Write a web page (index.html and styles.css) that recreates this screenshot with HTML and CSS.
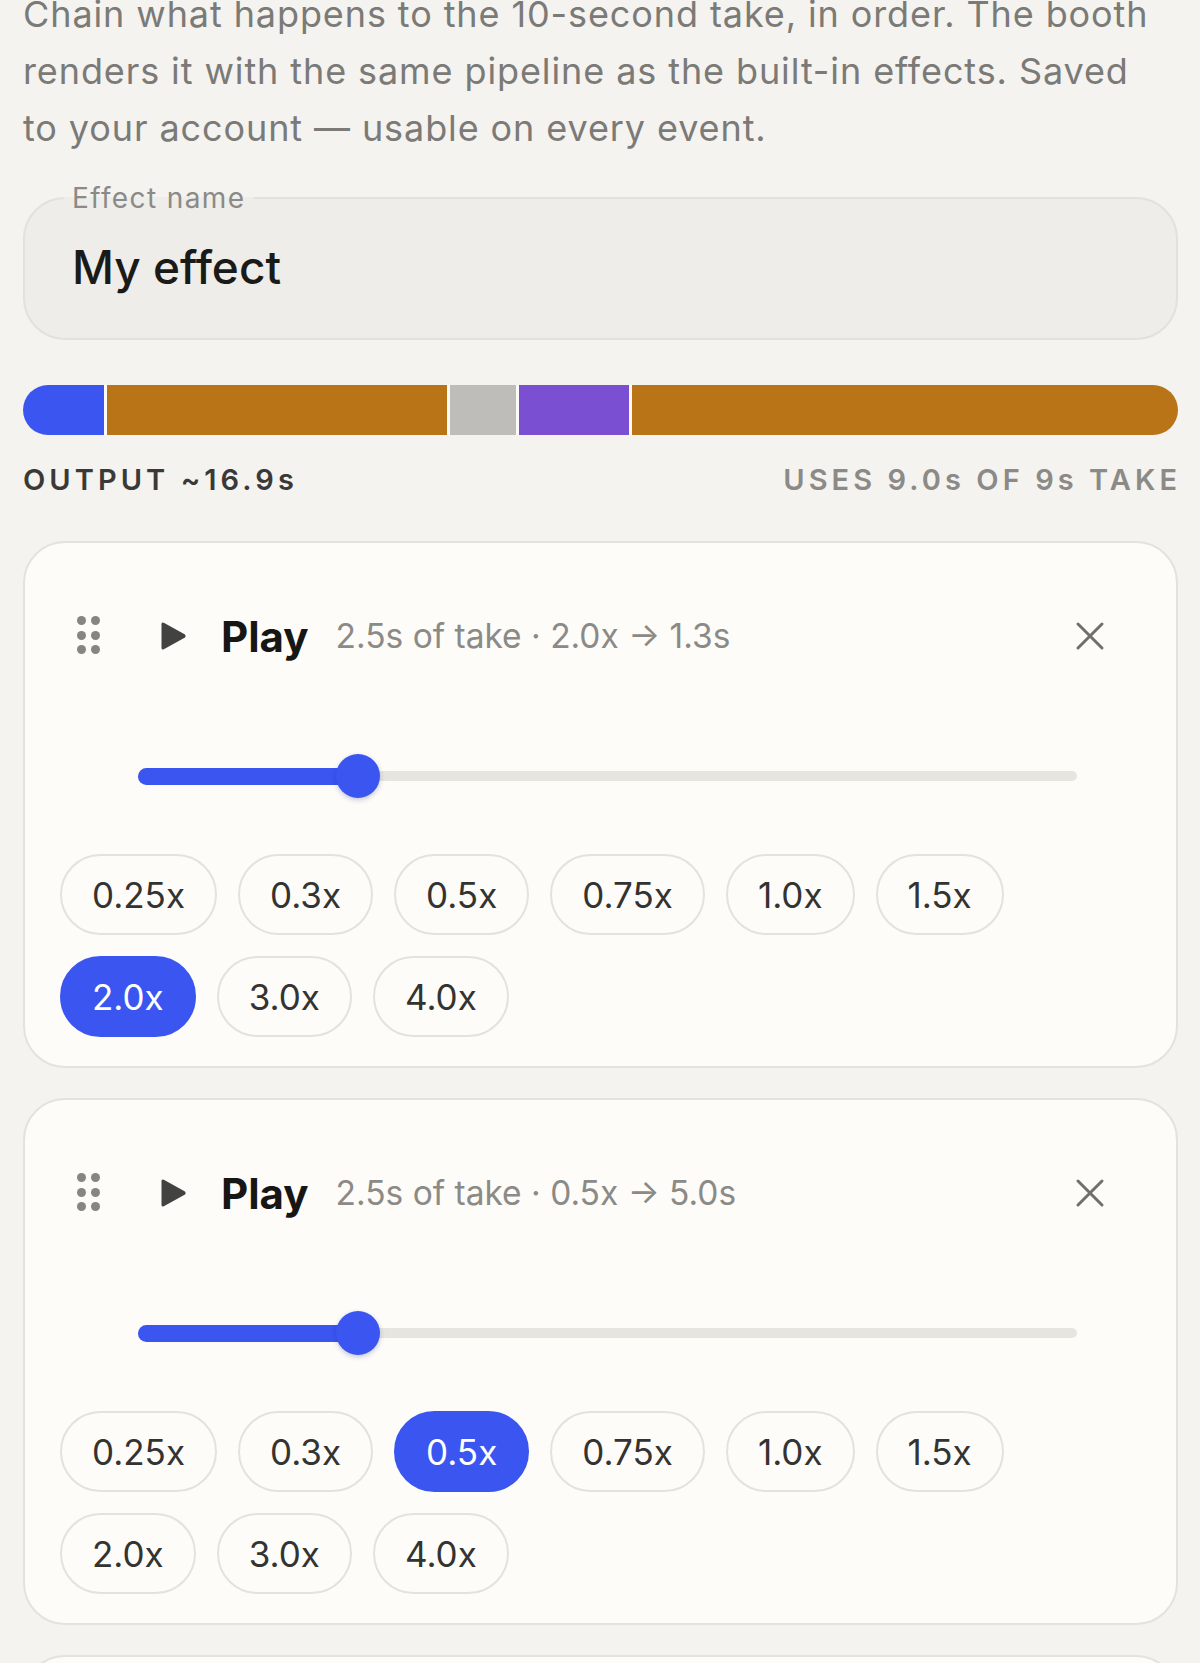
FILE: index.html
```html
<!DOCTYPE html>
<html lang="en">
<head>
<meta charset="utf-8">
<title>Custom effect</title>
<link rel="stylesheet" href="styles.css">
</head>
<body>
<main class="page">
  <p class="intro">Chain what happens to the 10-second take, in order. The booth renders it with the same pipeline as the built-in effects. Saved to your account — usable on every event.</p>

  <fieldset class="name-field">
    <legend>Effect name</legend>
    <div class="name-value">My effect</div>
  </fieldset>

  <div class="timeline">
    <span class="seg seg-blue" style="flex-grow:81"></span>
    <span class="seg seg-brown" style="flex-grow:339"></span>
    <span class="seg seg-gray" style="flex-grow:65"></span>
    <span class="seg seg-purple" style="flex-grow:110"></span>
    <span class="seg seg-brown" style="flex-grow:544"></span>
  </div>
  <div class="timeline-meta">
    <span class="meta-out">OUTPUT ~16.9s</span>
    <span class="meta-uses">USES 9.0s OF 9s TAKE</span>
  </div>

  <section class="step-card">
    <div class="step-head">
      <span class="drag"><i></i><i></i><i></i><i></i><i></i><i></i></span>
      <svg class="play-icon" width="27" height="30" viewBox="0 0 27 30"><path d="M1.5 3.2 Q1.5 0.6 3.8 1.8 L24.6 13.2 Q26.6 15 24.6 16.8 L3.8 28.2 Q1.5 29.4 1.5 26.8 Z" fill="#424240"/></svg>
      <span class="step-title">Play</span>
      <span class="step-desc">2.5s of take · 2.0x → 1.3s</span>
      <svg class="close-icon" width="30" height="30" viewBox="0 0 30 30"><path d="M3 3 L27 27 M27 3 L3 27" stroke="#6f6f6b" stroke-width="3" stroke-linecap="round"/></svg>
    </div>
    <div class="slider">
      <span class="track"></span>
      <span class="fill" style="width:23.4%"></span>
      <span class="thumb" style="left:calc(23.4% - 22px)"></span>
    </div>
    <div class="chips">
      <span class="chip">0.25x</span>
      <span class="chip">0.3x</span>
      <span class="chip">0.5x</span>
      <span class="chip">0.75x</span>
      <span class="chip">1.0x</span>
      <span class="chip">1.5x</span>
      <span class="chip chip-on">2.0x</span>
      <span class="chip">3.0x</span>
      <span class="chip">4.0x</span>
    </div>
  </section>

  <section class="step-card">
    <div class="step-head">
      <span class="drag"><i></i><i></i><i></i><i></i><i></i><i></i></span>
      <svg class="play-icon" width="27" height="30" viewBox="0 0 27 30"><path d="M1.5 3.2 Q1.5 0.6 3.8 1.8 L24.6 13.2 Q26.6 15 24.6 16.8 L3.8 28.2 Q1.5 29.4 1.5 26.8 Z" fill="#424240"/></svg>
      <span class="step-title">Play</span>
      <span class="step-desc">2.5s of take · 0.5x → 5.0s</span>
      <svg class="close-icon" width="30" height="30" viewBox="0 0 30 30"><path d="M3 3 L27 27 M27 3 L3 27" stroke="#6f6f6b" stroke-width="3" stroke-linecap="round"/></svg>
    </div>
    <div class="slider">
      <span class="track"></span>
      <span class="fill" style="width:23.4%"></span>
      <span class="thumb" style="left:calc(23.4% - 22px)"></span>
    </div>
    <div class="chips">
      <span class="chip">0.25x</span>
      <span class="chip">0.3x</span>
      <span class="chip chip-on">0.5x</span>
      <span class="chip">0.75x</span>
      <span class="chip">1.0x</span>
      <span class="chip">1.5x</span>
      <span class="chip">2.0x</span>
      <span class="chip">3.0x</span>
      <span class="chip">4.0x</span>
    </div>
  </section>

  <section class="step-card step-card-next">
    <div class="step-head">
      <span class="drag"><i></i><i></i><i></i><i></i><i></i><i></i></span>
      <svg class="close-icon" width="30" height="30" viewBox="0 0 30 30"><path d="M3 3 L27 27 M27 3 L3 27" stroke="#6f6f6b" stroke-width="3" stroke-linecap="round"/></svg>
    </div>
  </section>
</main>
</body>
</html>
```

FILE: styles.css
```css
* { box-sizing: border-box; }

html, body {
  margin: 0;
  background: #f4f3ef;
}

body {
  font-family: "Inter", "Noto Sans", "DejaVu Sans", sans-serif;
  color: #1c1c1b;
}

.page {
  padding: 0 22px 0 23px;
}

.intro {
  margin: -14px 15px 0 0;
  font-size: 36px;
  line-height: 57px;
  letter-spacing: 0.025em;
  color: #7b7a77;
}

.name-field {
  margin: 27px 0 0;
  min-width: 0;
  border: 2px solid #e3e1db;
  border-radius: 42px;
  background: #eeede9;
  padding: 28px 47px 44px;
}

.name-field legend {
  font-size: 28px;
  line-height: 28px;
  letter-spacing: 0.05em;
  padding: 0 8px;
  margin-left: -8px;
  color: #8b8a86;
}

.name-value {
  font-size: 46px;
  line-height: 54px;
  font-weight: 500;
  color: #1a1a19;
}

.timeline {
  margin-top: 45px;
  height: 50px;
  display: flex;
  gap: 3px;
  border-radius: 25px;
  overflow: hidden;
  background: #fbfaf6;
}

.seg {
  flex-basis: 0;
  height: 100%;
}

.seg-blue { background: #3a55f0; }
.seg-brown { background: #b87416; }
.seg-gray { background: #bebdb9; }
.seg-purple { background: #7b4fd1; }

.timeline-meta {
  margin-top: 30px;
  display: flex;
  justify-content: space-between;
  font-size: 29px;
  line-height: 30px;
  font-weight: 600;
  letter-spacing: 0.14em;
}

.meta-out { color: #3a3937; }
.meta-uses { color: #8b8a86; margin-right: -3px; }

.step-card {
  margin-top: 46px;
  background: #fdfcf9;
  border: 2px solid #e4e2dc;
  border-radius: 42px;
  padding: 68px 34px 29px 35px;
}

.step-card + .step-card {
  margin-top: 30px;
}

.step-card-next {
  min-height: 300px;
}

.step-head {
  display: flex;
  align-items: center;
  height: 50px;
}

.drag {
  display: grid;
  grid-template-columns: 9px 9px;
  gap: 5.5px 5px;
  margin-left: 17px;
  margin-top: -2px;
}

.drag i {
  width: 9px;
  height: 9px;
  border-radius: 50%;
  background: #858581;
}

.play-icon {
  margin-left: 60px;
  flex: none;
}

.step-title {
  margin-left: 34px;
  font-size: 42px;
  font-weight: 700;
  color: #161615;
}

.step-desc {
  margin-left: 27px;
  font-size: 33.5px;
  color: #8b8a86;
}

.close-icon {
  margin-left: auto;
  margin-right: 37px;
  flex: none;
}

.slider {
  position: relative;
  height: 44px;
  margin: 93px 65px 0 78px;
}

.track {
  position: absolute;
  left: 0;
  right: 0;
  top: 17px;
  height: 10px;
  border-radius: 5px;
  background: #e6e5e0;
}

.fill {
  position: absolute;
  left: 0;
  top: 14px;
  height: 17px;
  border-radius: 9px;
  background: #3a55f0;
}

.thumb {
  position: absolute;
  top: 0;
  width: 44px;
  height: 44px;
  border-radius: 50%;
  background: #3a55f0;
  box-shadow: 0 2px 5px rgba(30, 40, 120, 0.25);
}

.chips {
  margin-top: 56px;
  display: flex;
  flex-wrap: wrap;
  gap: 21px;
}

.chip {
  height: 81px;
  display: inline-flex;
  align-items: center;
  padding: 0 30px;
  border: 2px solid #e4e2dc;
  border-radius: 41px;
  font-size: 35px;
  color: #333331;
}

.chip-on {
  background: #3a55f0;
  border-color: #3a55f0;
  color: #ffffff;
}
```
